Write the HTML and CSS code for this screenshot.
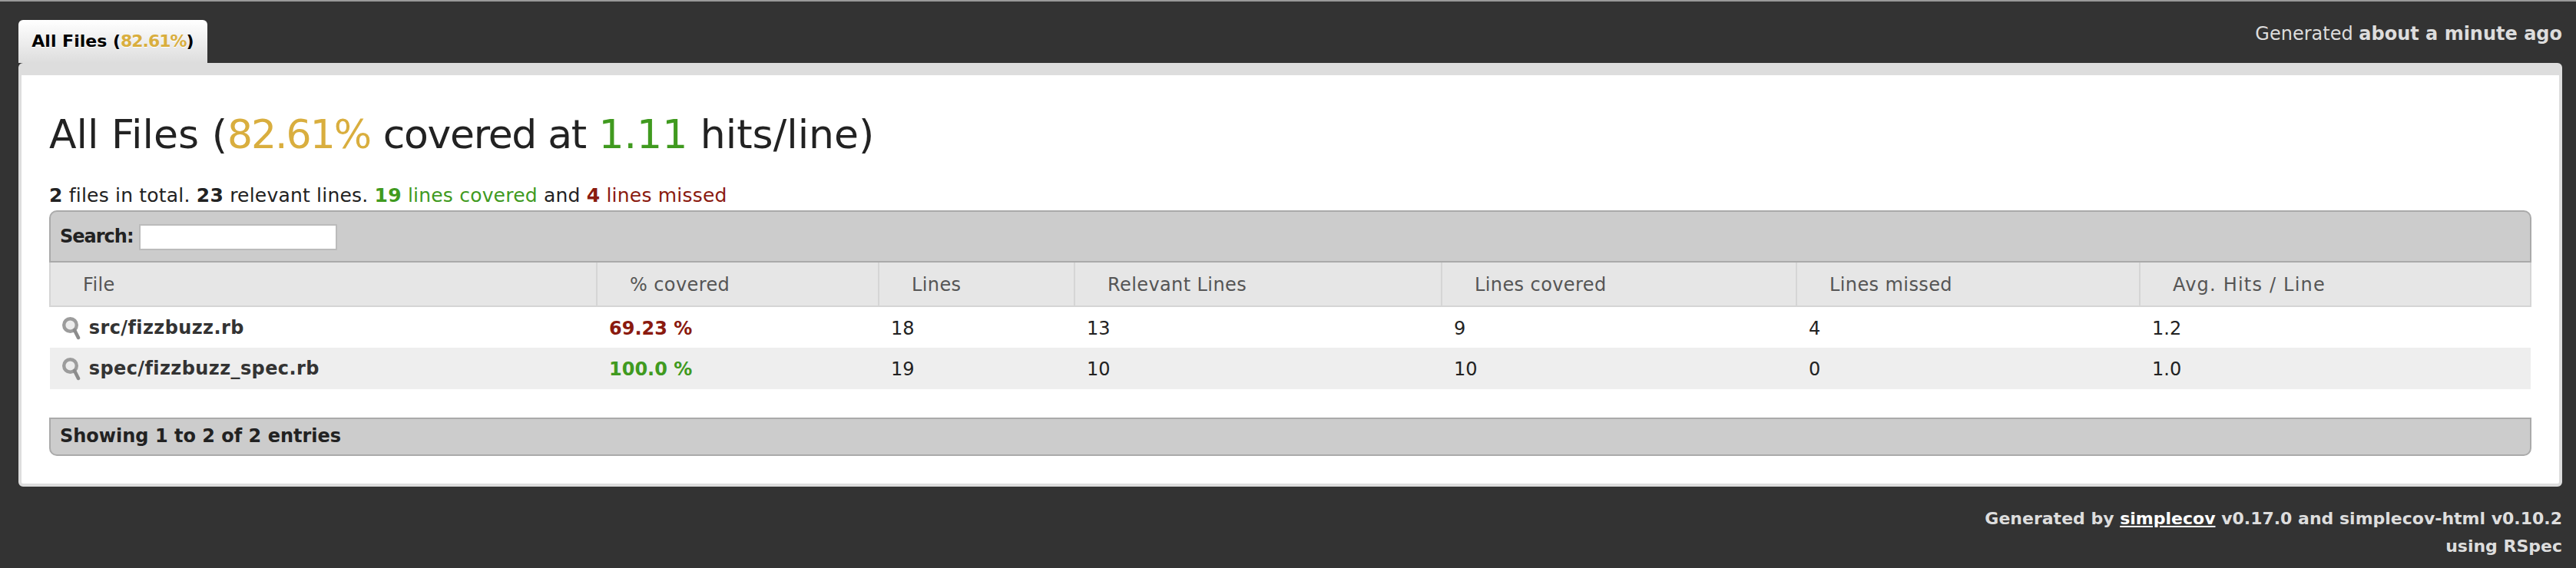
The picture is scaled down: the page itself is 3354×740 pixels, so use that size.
FILE: index.html
```html
<!DOCTYPE html>
<html>
  <head>
    <title>Code coverage</title>
    <link rel="stylesheet" href="styles.css">
  </head>
  <body>
    <div class="top-edge"></div>
    <div class="tabs">
      <div class="tab">All Files (<span class="yellow">82.61%</span>)</div>
      <div class="timestamp">Generated <b>about a minute ago</b></div>
    </div>

    <div class="panel">
      <h1>All Files (<span class="yellow">82.61%</span> <span class="tight">covered at</span> <span class="green">1.11</span> hits/line)</h1>
      <p class="summary">
        <b>2</b> files in total. <b>23</b> relevant lines.
        <span class="green"><b>19</b> lines covered</span> and
        <span class="red"><b>4</b> lines missed</span>
      </p>

      <div class="bar bar-top">
        <label class="search">Search: <input type="text"></label>
      </div>
      <table>
        <colgroup>
          <col class="col-file">
          <col class="col-covered">
          <col class="col-lines">
          <col class="col-relevant">
          <col class="col-hit">
          <col class="col-missed">
          <col>
        </colgroup>
        <thead>
          <tr>
            <th>File</th>
            <th>% covered</th>
            <th>Lines</th>
            <th>Relevant Lines</th>
            <th>Lines covered</th>
            <th>Lines missed</th>
            <th>Avg. Hits / Line</th>
          </tr>
        </thead>
        <tbody>
          <tr>
            <td class="file">
              <svg class="glass" viewBox="0 0 24 30"><circle cx="10.5" cy="10.5" r="8.3" fill="#ececec" stroke="#9c9c9c" stroke-width="4.4"/><path d="M16 17l5 10" stroke="#8c8c8c" stroke-width="4.5" stroke-linecap="round"/></svg>
              src/fizzbuzz.rb
            </td>
            <td class="pct red">69.23 %</td>
            <td>18</td>
            <td>13</td>
            <td>9</td>
            <td>4</td>
            <td>1.2</td>
          </tr>
          <tr>
            <td class="file">
              <svg class="glass" viewBox="0 0 24 30"><circle cx="10.5" cy="10.5" r="8.3" fill="#ececec" stroke="#9c9c9c" stroke-width="4.4"/><path d="M16 17l5 10" stroke="#8c8c8c" stroke-width="4.5" stroke-linecap="round"/></svg>
              spec/fizzbuzz_spec.rb
            </td>
            <td class="pct green">100.0 %</td>
            <td>19</td>
            <td>10</td>
            <td>10</td>
            <td>0</td>
            <td>1.0</td>
          </tr>
        </tbody>
      </table>
      <div class="bar bar-bottom">Showing 1 to 2 of 2 entries</div>
    </div>

    <div class="footer">
      Generated by <a href="#">simplecov</a> v0.17.0 and simplecov-html v0.10.2<br>
      using RSpec
    </div>
  </body>
</html>
```
FILE: styles.css
```css
html,
body {
  margin: 0;
  padding: 0;
  background: #333;
}

body {
  font-family: "DejaVu Sans", sans-serif;
  font-size: 24px;
  color: #222;
  height: 740px;
  overflow: hidden;
}

.top-edge {
  height: 2px;
  background: #999;
}

.yellow {
  color: #d9ae3e;
}

.green {
  color: #409a1f;
}

.red {
  color: #8a1a0f;
}

.tabs {
  display: flex;
  justify-content: space-between;
  height: 80px;
  padding: 0 18px 0 24px;
}

.tab {
  margin-top: 24px;
  width: 246px;
  height: 56px;
  box-sizing: border-box;
  padding-top: 15px;
  text-align: center;
  font-size: 22px;
  font-weight: bold;
  color: #000;
  text-shadow: 0 1px 0 #fff;
  border-radius: 6px 6px 0 0;
  background-image: linear-gradient(to bottom, #fff 0%, #ddd 100%);
}

.tab .yellow {
  letter-spacing: -1px;
}

.timestamp {
  margin-top: 28px;
  color: #ddd;
}

.panel {
  margin: 0 18px 0 24px;
  height: 552px;
  box-sizing: border-box;
  background: #fff;
  border: solid #ddd;
  border-width: 16px 4px 4px 4px;
  border-radius: 6px;
  padding: 0 36px;
}

h1 {
  margin: 0;
  padding-top: 46px;
  font-size: 52px;
  line-height: 62px;
  font-weight: normal;
}

h1 .yellow {
  letter-spacing: -2px;
}

h1 .tight {
  letter-spacing: -1.3px;
}

.summary {
  margin: 0;
  padding-top: 34px;
  height: 34px;
  line-height: 30px;
  font-size: 25px;
  letter-spacing: 0.2px;
}

.bar {
  box-sizing: border-box;
  background: #ccc;
  border: 2px solid #aaa;
  font-weight: bold;
  padding-left: 12px;
}

.bar-top {
  height: 68px;
  padding-top: 2px;
  border-radius: 10px 10px 0 0;
  display: flex;
  align-items: center;
}

.bar-bottom {
  margin-top: 37px;
  height: 50px;
  line-height: 44px;
  border-radius: 0 0 10px 10px;
}

.search {
  letter-spacing: -1px;
}

.search input {
  width: 258px;
  height: 34px;
  box-sizing: border-box;
  border: 2px solid #bbb;
  padding: 0;
  vertical-align: middle;
  background: #fff;
}

table {
  width: 100%;
  table-layout: fixed;
  border-collapse: collapse;
}

.col-file {
  width: 712px;
}

.col-covered {
  width: 367px;
}

.col-lines {
  width: 255px;
}

.col-relevant {
  width: 478px;
}

.col-hit {
  width: 462px;
}

.col-missed {
  width: 447px;
}

th {
  height: 57px;
  box-sizing: border-box;
  padding: 2px 0 0 42px;
  text-align: left;
  font-weight: normal;
  color: #555;
  letter-spacing: 0.4px;
  background: #e6e6e6;
  border: 2px solid #d5d5d5;
  border-top: none;
}

th:last-child {
  letter-spacing: 1.2px;
}

td {
  height: 54px;
  box-sizing: border-box;
  padding: 2px 0 0 16px;
  color: #222;
}

tbody tr:nth-child(even) td {
  background: #eee;
}

td.file {
  font-weight: bold;
  color: #333;
  letter-spacing: 0.4px;
  white-space: nowrap;
}

td.pct {
  font-weight: bold;
}

td.red {
  color: #8a1a0f;
}

td.green {
  color: #409a1f;
}

.glass {
  width: 24px;
  height: 30px;
  vertical-align: middle;
  margin-right: 2px;
  filter: blur(0.7px);
}

.footer {
  padding: 24px 18px 0 0;
  text-align: right;
  font-size: 22px;
  font-weight: bold;
  line-height: 36px;
  color: #ddd;
}

.footer a {
  color: #fff;
}
```
